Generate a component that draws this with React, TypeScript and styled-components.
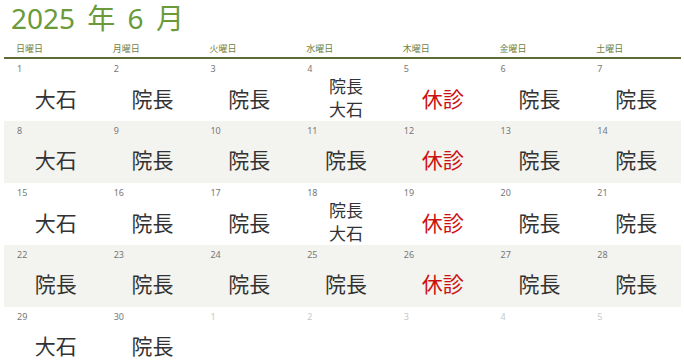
import styled, { createGlobalStyle } from "styled-components";

const Global = createGlobalStyle`
  body {
    margin: 0;
    background: #fff;
    font-family: "Noto Sans", "Noto Sans CJK JP", sans-serif;
  }
`;

const Page = styled.div`
  width: 684px;
  height: 362px;
  overflow: hidden;
`;

const Title = styled.h1`
  margin: 0;
  padding: 0 0 0 11px;
  height: 40px;
  font-size: 28px;
  line-height: 37px;
  font-weight: 400;
  word-spacing: 5px;
  color: #6a9a3a;
`;

const Calendar = styled.div`
  margin-left: 4px;
  width: 677px;
`;

const HeadRow = styled.div`
  display: grid;
  grid-template-columns: repeat(7, 1fr);
  height: 17px;
  border-bottom: 2px solid #5e6b34;
`;

const HeadCell = styled.div`
  padding-left: 12px;
  font-size: 9px;
  line-height: 12px;
  padding-top: 3px;
  color: #6f7f3e;
`;

const WeekRow = styled.div<{ $shaded: boolean }>`
  display: grid;
  grid-template-columns: repeat(7, 1fr);
  height: 62px;
  background: ${(p) => (p.$shaded ? "#f3f3ef" : "transparent")};
`;

const Cell = styled.div`
  display: flex;
  flex-direction: column;
`;

const DayNum = styled.div<{ $other: boolean }>`
  height: 16px;
  padding: 5px 0 0 13px;
  box-sizing: border-box;
  font-size: 9px;
  line-height: 10px;
  color: ${(p) => (p.$other ? "#c8c8c8" : "#777")};
`;

const Duty = styled.div<{ $off: boolean; $double: boolean }>`
  flex: 1;
  display: flex;
  flex-direction: column;
  align-items: center;
  justify-content: center;
  padding-left: 7px;
  padding-bottom: ${(p) => (p.$double ? "2px" : "0")};
  font-size: ${(p) => (p.$double ? "17px" : "21px")};
  line-height: ${(p) => (p.$double ? "23px" : "26px")};
  color: ${(p) => (p.$off ? "#cc1111" : "#333")};
`;

const heads = ["日曜日", "月曜日", "火曜日", "水曜日", "木曜日", "金曜日", "土曜日"];

type Day = { n: number; other?: boolean; duty: string[] };

const dutyFor = (n: number): string[] => {
  const dow = (n - 1) % 7;
  if (dow === 0) return n === 22 ? ["院長"] : ["大石"];
  if (dow === 4) return ["休診"];
  if (dow === 3 && (n === 4 || n === 18)) return ["院長", "大石"];
  return ["院長"];
};

const days: Day[] = [];
for (let n = 1; n <= 30; n++) days.push({ n, duty: dutyFor(n) });
for (let n = 1; n <= 5; n++) days.push({ n, other: true, duty: [] });

const weeks: Day[][] = [];
for (let i = 0; i < days.length; i += 7) weeks.push(days.slice(i, i + 7));

export default function App() {
  return (
    <Page>
      <Global />
      <Title>2025 年 6 月</Title>
      <Calendar>
        <HeadRow>
          {heads.map((h) => (
            <HeadCell key={h}>{h}</HeadCell>
          ))}
        </HeadRow>
        {weeks.map((w, i) => (
          <WeekRow key={i} $shaded={i % 2 === 1}>
            {w.map((d) => (
              <Cell key={`${i}-${d.n}`}>
                <DayNum $other={!!d.other}>{d.n}</DayNum>
                <Duty $off={d.duty[0] === "休診"} $double={d.duty.length > 1}>
                  {d.duty.map((t) => (
                    <span key={t}>{t}</span>
                  ))}
                </Duty>
              </Cell>
            ))}
          </WeekRow>
        ))}
      </Calendar>
    </Page>
  );
}
